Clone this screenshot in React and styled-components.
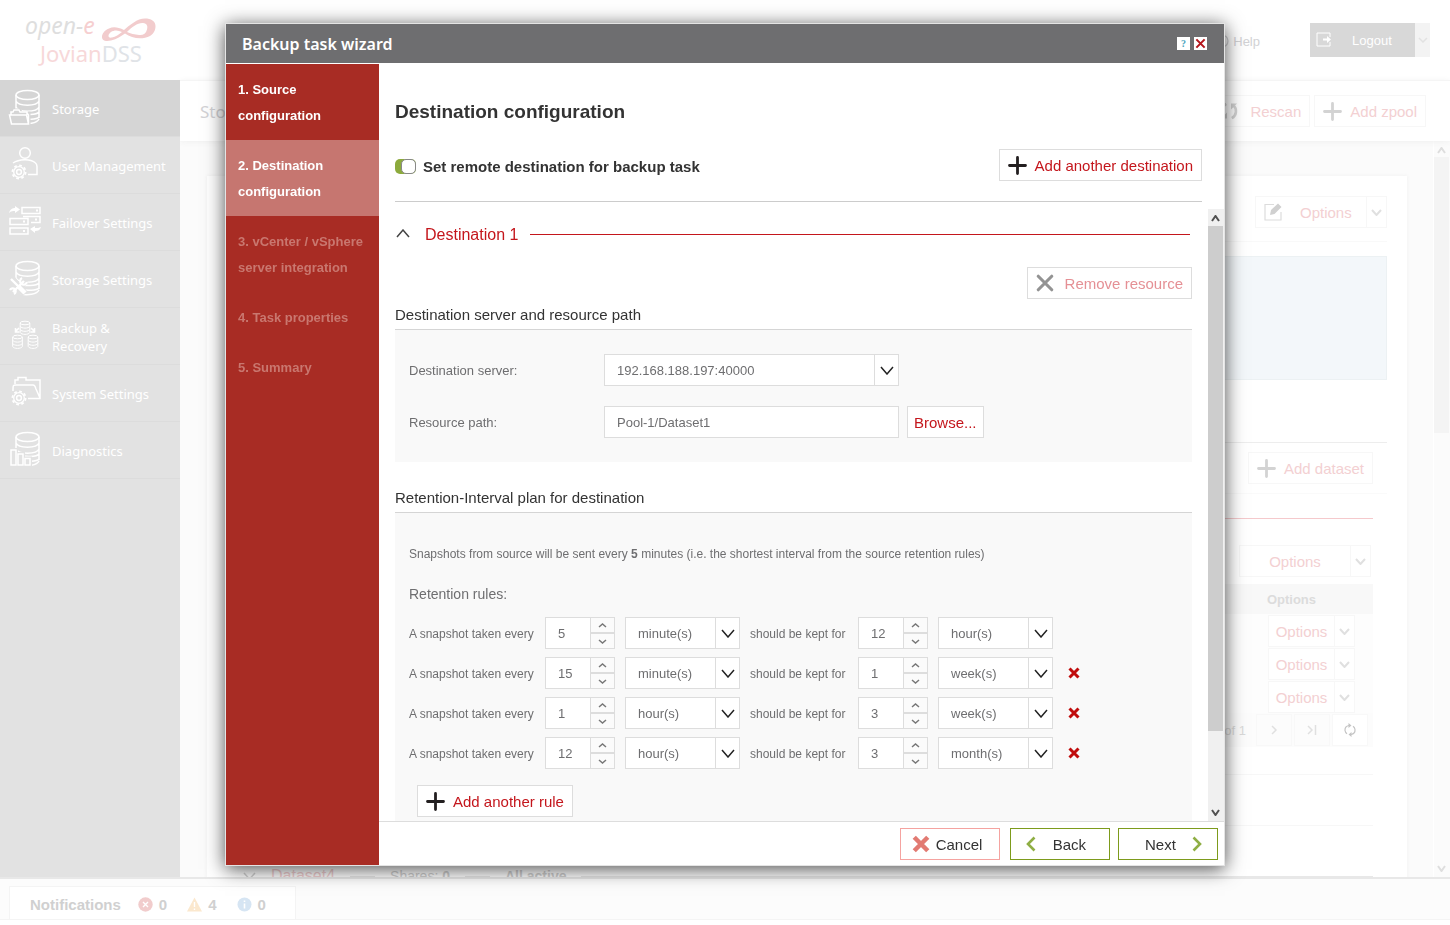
import React from "react";
import styled, { createGlobalStyle } from "styled-components";

const Global = createGlobalStyle`
  *, *::before { box-sizing: border-box; }
  body { margin: 0; background: #fff; font-family: "Liberation Sans", Arial, sans-serif; color: #333; }
  button, input, select { font-family: inherit; margin: 0; }
  a { text-decoration: none; }
`;

/* ---------- faded application behind the wizard ---------- */

const Page = styled.div`
  display: flex;
  flex-direction: column;
  height: 100vh;
  min-height: 640px;
  overflow: hidden;
`;

const Header = styled.header`
  flex: none;
  display: flex;
  justify-content: space-between;
  align-items: center;
  height: 80px;
  padding: 0 20px 0 24px;
`;

const HeaderActions = styled.div`
  display: flex;
  align-items: center;
  gap: 50px;
`;

const HelpLink = styled.a`
  display: flex;
  align-items: center;
  gap: 4px;
  padding-top: 2px;
  font-size: 13px;
  color: #d2d2d5;
`;

const Logout = styled.div`
  display: flex;
  height: 34px;
`;

const LogoutButton = styled.button`
  display: flex;
  align-items: center;
  gap: 20px;
  width: 105px;
  padding: 0 6px;
  border: 0;
  background: #d8d8d8;
  color: #fff;
  font-size: 13px;
`;

const LogoutMore = styled.button`
  display: grid;
  place-items: center;
  width: 15px;
  padding: 0;
  border: 0;
  background: #f3f3f3;
`;

const Middle = styled.div`
  flex: 1;
  min-height: 0;
  display: flex;
`;

const Sidebar = styled.nav`
  flex: none;
  z-index: 2;
  width: 180px;
  background: #e2e2e2;
`;

const SideLink = styled.a`
  display: flex;
  align-items: center;
  gap: 9px;
  height: 57px;
  padding: 0 12px 0 7px;
  border-bottom: 1px solid #dcdcdc;
  background: ${(p) => (p.$active ? "#d5d5d5" : "transparent")};
  color: #fff;
  font: 13px/18px "Noto Sans", sans-serif;
`;

const SideText = styled.span`
  padding-top: 2px;
`;

const SideIcon = styled.svg`
  flex: none;
  fill: none;
  stroke: #fff;
  stroke-width: 1.5;
`;

const Workspace = styled.div`
  flex: 1;
  min-width: 0;
  display: flex;
  flex-direction: column;
`;

const TitleBar = styled.div`
  flex: none;
  z-index: 1;
  display: flex;
  justify-content: space-between;
  align-items: center;
  height: 61px;
  padding: 0 24px 0 20px;
  border-top: 1px solid #f5f5f5;
  box-shadow: 0 1px 6px #f0f0f0;
  background: #fff;
`;

const PageTitle = styled.h1`
  margin: 0;
  font: 17px "Noto Sans", sans-serif;
  color: #d2d2d5;
`;

const Group = styled.div`
  display: flex;
  gap: 4px;
`;

const FadedButton = styled.button`
  display: flex;
  align-items: center;
  justify-content: ${(p) => (p.$center ? "center" : "flex-start")};
  gap: ${(p) => p.$gap || 8}px;
  width: ${(p) => (p.$width ? p.$width + "px" : "auto")};
  height: 32px;
  padding: 0 8px;
  border: 1px solid #f7f7f7;
  background: #fff;
  color: #f3d0d2;
  font-size: 15px;
  white-space: nowrap;
`;

const FadedMore = styled.button`
  display: grid;
  place-items: center;
  width: 21px;
  height: 32px;
  margin-left: -1px;
  padding: 0;
  border: 1px solid #f7f7f7;
  background: #fff;
`;

const Split = styled.div`
  display: flex;
`;

const Desk = styled.div`
  flex: 1;
  min-height: 0;
  display: flex;
  background: #fbfbfb;
`;

const DeskScroll = styled.div`
  flex: 1;
  min-width: 0;
  overflow: hidden;
  padding: 35px 26px 0 27px;
`;

const Card = styled.section`
  height: 900px;
  padding: 20px 20px 0 36px;
  background: #fff;
  box-shadow: 0 0 4px #efefef;
`;

const CardTop = styled.div`
  display: flex;
  justify-content: flex-end;
  height: 46px;
  border-bottom: 1px solid #f9f9f9;
`;

const InfoBox = styled.div`
  height: 124px;
  margin-top: 14px;
  border: 1px solid #ecf1f3;
  background: #f3f7fa;
`;

const Tools = styled.div`
  display: flex;
  justify-content: flex-end;
  height: 51px;
  margin-top: 62px;
  padding: 9px 14px 0 0;
  border-top: 1px solid #ededed;
`;

const Inset = styled.div`
  padding-right: 14px;
  border-top: 1px solid #fafafa;
`;

const DatasetBar = styled.div`
  display: flex;
  justify-content: flex-end;
  height: 66px;
  margin-top: 24px;
  padding: 26px 2px 0 0;
  border-top: 1px solid #f5c9cc;
`;

const FadedTable = styled.table`
  width: 100%;
  border-collapse: collapse;
  background: #fdfdfd;
  font-size: 15px;

  th {
    height: 30px;
    padding: 0 57px 0 0;
    background: #f8f8f8;
    color: #dcdcdc;
    font-size: 13px;
    text-align: right;
  }
  td {
    height: 33px;
    padding: 1px 18px 0 0;
  }
  td > div { justify-content: flex-end; }
`;

const Pager = styled.div`
  display: flex;
  justify-content: flex-end;
  align-items: center;
  gap: 2px;
  height: 34px;
  padding-right: 5px;
  background: #fcfcfc;
  color: #dadada;
  font-size: 13px;
`;

const PagerButton = styled.button`
  display: grid;
  place-items: center;
  width: 36px;
  height: 32px;
  padding: 0;
  border: 1px solid #f8f8f8;
  background: ${(p) => (p.$live ? "#fff" : "#fcfcfc")};
`;

const PagerText = styled.span`
  margin-right: 8px;
`;

const Divider = styled.div`
  height: ${(p) => p.$height}px;
  border-bottom: 1px solid #f7f7f7;
`;

const NextDataset = styled.div`
  display: flex;
  align-items: center;
  gap: 15px;
  height: 100px;
  color: #d2d2d2;
  font-size: 14px;
`;

const NextName = styled.span`
  color: #f3d0d2;
  font-size: 16px;
`;

const Hair = styled.span`
  flex: ${(p) => (p.$grow ? "1" : "none")};
  width: 25px;
  height: 1px;
  background: #e8e8e8;
`;

const PageRail = styled.div`
  flex: none;
  display: flex;
  flex-direction: column;
  align-items: center;
  width: 17px;
  padding: 6px 1px 5px 0;
  border-left: 1px solid #fff;
`;

const PageThumb = styled.div`
  width: 15px;
  height: 38%;
  margin-top: 3px;
  margin-bottom: auto;
  background: #f4f4f4;
`;

const Bottom = styled.footer`
  flex: none;
  display: flex;
  height: 48px;
  padding-bottom: 5px;
  border-top: 2px solid #e8e8e8;
`;

const BottomBand = styled.div`
  flex: 1;
  display: flex;
  align-items: flex-end;
  padding-left: 9px;
  border-bottom: 1px solid #f4f4f4;
  background: #fcfcfc;
`;

const NoticeTab = styled.div`
  display: flex;
  align-items: center;
  gap: 17px;
  width: 287px;
  height: 33px;
  padding: 2px 0 0 20px;
  border: 1px solid #f4f4f4;
  border-bottom: 0;
  background: #fff;
  color: #d0d0d0;
  font-size: 15px;
  font-weight: bold;
`;

const Count = styled.span`
  display: flex;
  align-items: center;
  gap: 6px;
  margin-right: 3px;
`;

/* ---------- wizard ---------- */

const Backdrop = styled.div`
  position: fixed;
  inset: 0;
  z-index: 5;
  display: flex;
  justify-content: center;
  align-items: flex-start;
  padding: 23px 16px 59px;
`;

const Dialog = styled.section`
  display: flex;
  flex-direction: column;
  width: 1000px;
  max-width: 100%;
  height: 100%;
  border: 1px solid #e4e4e4;
  background: #fff;
  box-shadow: 0 3px 18px rgba(0, 0, 0, 0.7);
`;

const DialogBar = styled.header`
  flex: none;
  display: flex;
  align-items: center;
  gap: 4px;
  height: 39px;
  margin-bottom: 1px;
  padding: 0 17px 0 16px;
  background: #6e6e70;
`;

const DialogTitle = styled.h2`
  flex: 1;
  margin: 0;
  color: #fff;
  font: 600 16px "Noto Sans", sans-serif;
`;

const BarButton = styled.button`
  display: grid;
  place-items: center;
  width: 13px;
  height: 13px;
  padding: 0;
  border: 0;
  background: #fff;
  color: #4ba3bd;
  font: bold 10px/13px "Liberation Serif", serif;
`;

const DialogBody = styled.div`
  flex: 1;
  min-height: 0;
  display: flex;
`;

const Steps = styled.ol`
  flex: none;
  width: 153px;
  margin: 0;
  padding: 0;
  list-style: none;
  background: #a82c24;
`;

const Step = styled.li`
  padding: 13px 8px 11px 12px;
  background: ${(p) => (p.$state === "current" ? "#c67670" : "transparent")};
  color: ${(p) => (p.$state === "later" ? "#c9776f" : "#fff")};
  font-size: 13px;
  font-weight: bold;
  line-height: 26px;
`;

const Content = styled.div`
  flex: 1;
  min-width: 0;
  display: flex;
  flex-direction: column;
`;

const Intro = styled.div`
  flex: none;
  margin: 0 22px 7px 16px;
  padding: 34px 0 20px;
  border-bottom: 1px solid #ccc;
`;

const Heading = styled.h3`
  margin: 0 0 24px;
  font-size: 19px;
  line-height: 27px;
  color: #333;
`;

const IntroRow = styled.div`
  display: flex;
  justify-content: space-between;
  align-items: center;
`;

const SwitchLabel = styled.label`
  display: flex;
  align-items: center;
  gap: 7px;
  padding-top: 2px;
  color: #333;
  font-size: 15px;
  font-weight: bold;
`;

const Switch = styled.input`
  appearance: none;
  width: 21px;
  height: 15px;
  margin: 0;
  border-radius: 5px;
  background: #8caa3c;

  &::before {
    content: "";
    display: block;
    width: 15px;
    height: 15px;
    margin-left: 6px;
    border: 1px solid #888;
    border-radius: 5px;
    background: #fff;
  }
`;

const Button = styled.button`
  display: flex;
  align-items: center;
  gap: ${(p) => p.$gap || 8}px;
  height: 32px;
  padding: ${(p) => (p.$plain ? "0 6px" : "0 8px")};
  border: 1px solid #ddd;
  background: #fff;
  color: ${(p) => (p.disabled ? "#e59095" : "#c4161c")};
  font-size: 15px;
  white-space: nowrap;
`;

const ScrollRow = styled.div`
  flex: 1;
  min-height: 0;
  display: flex;
`;

const ScrollArea = styled.div`
  flex: 1;
  min-width: 0;
  overflow: hidden;
  padding: 12px 16px 0;
`;

const Rail = styled.div`
  flex: none;
  display: flex;
  flex-direction: column;
  align-items: center;
  justify-content: space-between;
  width: 16px;
  padding: 6px 1px 5px 0;
  background: #f0f0f0;
`;

const RailThumb = styled.div`
  width: 15px;
  height: 84%;
  margin: 4px 0 auto;
  background: #cdcdcd;
`;

const DestinationHead = styled.div`
  display: flex;
  align-items: center;
  gap: 12px;
  height: 27px;
  padding-right: 2px;
  color: #c4161c;
  font-size: 16px;
`;

const Toggle = styled.button`
  display: grid;
  place-items: center;
  width: 18px;
  height: 18px;
  padding: 0 3px 3px 0;
  border: 0;
  background: none;
`;

const RedLine = styled.span`
  flex: 1;
  height: 1px;
  background: #c4161c;
`;

const RemoveRow = styled.div`
  display: flex;
  justify-content: flex-end;
  margin-top: 19px;
`;

const SectionTitle = styled.h4`
  height: 31px;
  margin: ${(p) => p.$top || 0}px 0 0;
  padding-top: 6px;
  border-bottom: 1px solid #d5d5d5;
  color: #333;
  font-size: 15px;
  font-weight: normal;
  line-height: 20px;
`;

const Panel = styled.div`
  padding: ${(p) => p.$top || 24}px 14px 24px;
  background: #f9f9f9;
  color: #6e6e70;
  font-size: 12px;
`;

const Field = styled.div`
  display: grid;
  grid-template-columns: 195px 295px auto;
  align-items: center;
  justify-content: start;
  & + & { margin-top: 20px; }
`;

const BrowseCell = styled.div`
  padding-left: 8px;
`;

const FieldLabel = styled.label`
  font-size: 13px;
`;

const TextInput = styled.input`
  width: 100%;
  height: 32px;
  padding: 0 12px;
  border: 1px solid #ddd;
  background: #fff;
  color: #6e6e70;
  font-size: 13px;
`;

const SelectBox = styled.div`
  display: grid;
  grid-template-columns: 1fr 25px;
`;

const NativeSelect = styled.select`
  grid-area: 1 / 1 / 2 / 3;
  appearance: none;
  height: 32px;
  padding: 0 32px 0 12px;
  border: 1px solid #ddd;
  border-radius: 0;
  background: #fff;
  color: #6e6e70;
  font-size: 13px;
`;

const SelectArrow = styled.span`
  grid-area: 1 / 2;
  display: grid;
  place-items: center;
  margin: 1px 1px 1px 0;
  border-left: 1px solid #ddd;
  pointer-events: none;
`;

const Note = styled.p`
  margin: 0;
  line-height: 18px;
`;

const RulesTitle = styled.p`
  margin: 21px 0 13px;
  font-size: 14px;
  line-height: 20px;
`;

const Rule = styled.div`
  display: grid;
  grid-template-columns: 126px 70px 115px 98px 70px 115px 22px;
  column-gap: 10px;
  align-items: center;
  height: 32px;
  margin-bottom: 8px;
`;

const RuleText = styled.span`
  padding-top: 2px;
  line-height: 18px;
  white-space: nowrap;
`;

const Stepper = styled.div`
  display: grid;
  grid-template-columns: 1fr 24px;
  grid-template-rows: 1fr 1fr;
  height: 32px;
  border: 1px solid #ddd;
  background: #fff;
`;

const StepperInput = styled.input`
  grid-row: 1 / 3;
  min-width: 0;
  padding: 0 12px;
  border: 0;
  background: none;
  color: #6e6e70;
  font-size: 13px;
`;

const StepperButton = styled.button`
  display: grid;
  place-items: center;
  padding: 0;
  border: 0;
  border-left: 1px solid #ddd;
  border-${(p) => (p.$up ? "bottom" : "top")}: 1px solid #ddd;
  background: #fbfbfb;
`;

const DeleteButton = styled.button`
  display: grid;
  place-items: center;
  width: 22px;
  height: 22px;
  padding: 0;
  border: 0;
  background: none;
`;

const AddRule = styled.div`
  display: flex;
  margin: 16px 8px 0;
`;

const DialogFooter = styled.footer`
  flex: none;
  display: flex;
  justify-content: flex-end;
  gap: 8px;
  height: 44px;
  padding: 6px 6px 5px;
  border-top: 1px solid #ddd;
`;

const FooterButton = styled.button`
  display: flex;
  align-items: center;
  justify-content: ${(p) => (p.$spread ? "space-between" : "center")};
  gap: 6px;
  width: 100px;
  height: 32px;
  margin-right: ${(p) => (p.$tone === "danger" ? 2 : 0)}px;
  padding: ${(p) => p.$pad};
  border: 1px solid ${(p) => (p.$tone === "danger" ? "#f5a3a0" : "#7d9b1c")};
  background: #fff;
  color: #333;
  font-size: 15px;
`;

/* ---------- drawings ---------- */

const Chevron = ({ w = 13, h = 7, color = "#222", width = 1.5, up, cap }) => (
  <svg width={w} height={h} viewBox={`0 0 ${w} ${h}`} fill="none" aria-hidden="true">
    <path
      d={up ? `M1 ${h - 1}L${w / 2} 1L${w - 1} ${h - 1}` : `M1 1L${w / 2} ${h - 1}L${w - 1} 1`}
      stroke={color}
      strokeWidth={width}
      strokeLinecap={cap}
    />
  </svg>
);

const Plus = ({ color = "#231f20" }) => (
  <svg width="19" height="19" viewBox="0 0 19 19" aria-hidden="true">
    <path d="M9.500 1.500v16M1.500 9.500h16" stroke={color} strokeWidth="2.800" strokeLinecap="round" />
  </svg>
);

const Cross = ({ size, color, width, cap }) => (
  <svg width={size} height={size} viewBox="0 0 16 16" aria-hidden="true">
    <path d="M2 2L14 14M14 2L2 14" stroke={color} strokeWidth={width} strokeLinecap={cap} />
  </svg>
);

const Recycle = ({ size = 18, color = "#d3d3d3", width = 2.6 }) => (
  <svg width={size} height={size} viewBox="0 0 18 18" fill="none" stroke={color} strokeWidth={width} aria-hidden="true">
    <path d="M6.200 1.800A8 8 0 0 0 4.500 14.600M11.800 16.200A8 8 0 0 0 13.500 3.400" />
    <path d="M1 16.500h6v-6zM17 1.500h-6v6z" fill={color} stroke="none" />
  </svg>
);

/* two thin arcs with small arrow heads at the top and the bottom */
const Refresh = () => (
  <svg width="12" height="14" viewBox="0 0 12 14" fill="none" stroke="#c4c4c4" strokeWidth="1.200" aria-hidden="true">
    <path d="M5 2.500C2 3 .8 5 1 7.500c.2 1.500 1 2.500 2 3.200M7 11.500c3-.5 4.200-2.500 4-5-.2-1.500-1-2.500-2-3.200" />
    <path d="M4.500 0l3 2.500-3 2.500zM7.500 9l-3 2.500 3 2.500z" fill="#c4c4c4" stroke="none" />
  </svg>
);

const Edit = () => (
  <svg width="18" height="18" viewBox="0 0 18 18" aria-hidden="true">
    <path d="M10 1.500H1v15.500h16V9" fill="none" stroke="#dcdcdc" strokeWidth="1.200" />
    <path d="M6 12l1-5 7-6.500 3.500 3.500-7 7z" fill="#d0d0d0" />
  </svg>
);

const Disks = () => (
  <g>
    <ellipse cx="20.500" cy="6" rx="11.500" ry="4.500" />
    <path d="M9 6v23M32 6v23M9 12c2 5.500 21 5.500 23 0M9 18c2 5.500 21 5.500 23 0M12 23.500c5 3 18 2.500 20-.5M14 29c5 2 16 1.500 18-1M14 34c6 1.500 16 .5 18-4" />
  </g>
);

const Gear = ({ x, y }) => (
  <g transform={`translate(${x} ${y})`}>
    <circle r="5.300" strokeWidth="1.300" />
    <circle r="6.600" strokeWidth="1.800" strokeDasharray="2.700 2.480" />
    <circle r="2.400" />
  </g>
);

const icons = {
  storage: (
    <>
      <Disks />
      <path d="M3 35V24h3l1-3h6l1 3h8v11z" fill="#d5d5d5" stroke="#d5d5d5" strokeWidth="3" />
      <path d="M4 26v-3h2l1-2h5l1 2h7v3M2.500 26h17l2 9H4.500zM20 24l1.500 2v9" />
    </>
  ),
  user: (
    <>
      <circle cx="18" cy="7" r="5.300" />
      <path d="M6 17c6-4 17-4.500 22-.5 1.500 1 2 2 2 4V28.500H21" />
      <Gear x={12} y={26} />
    </>
  ),
  failover: (
    <>
      <path d="M15 4.500h18v6H15zM16 13.500h17v6H24M3 15.500h18v6H3zM3 25h18v6H3z" />
      <path d="M29 7.500h2M28 16.500h2M16 18.500h2M16 28h2" strokeWidth="1.800" />
      <path d="M2 10c1-4 4-5 6-5V3l5 3.500L8 10V8c-2 0-4 0-6 2zM34 24c-1 3-3 4-6 4v2l-5-4 5-3v2c2 0 4 0 6-1z" fill="#fff" stroke="none" />
    </>
  ),
  settings: (
    <>
      <Disks />
      <path d="M5 19L18 34M19 20L5 34" stroke="#e2e2e2" strokeWidth="7" />
      <path d="M4 19L11 26M17 21L6 32" strokeWidth="2.400" />
      <path d="M11 26l7 7" strokeWidth="4.500" />
      <path d="M15 18a3.500 3.500 0 1 0 5 4M3 30a3 3 0 1 1 4 4" strokeWidth="2.200" />
    </>
  ),
  backup: (
    <g strokeWidth="1">
      {[[18, 6], [10.5, 20], [26, 20]].map(([x, y]) => (
        <g key={x} transform={`translate(${x} ${y})`}>
          <ellipse rx="4.800" ry="1.800" />
          <path d="M-4.800 0v9.500c1 2.500 8.600 2.500 9.600 0V0M-4.800 3.300c1 2.400 8.600 2.400 9.600 0M-4.800 6.500c1 2.400 8.600 2.400 9.600 0" />
        </g>
      ))}
      <path d="M12 11l-3 3M24 11l3 3M8.500 11v4h4M27.500 11v4h-4" strokeWidth="1.600" />
    </g>
  ),
  system: (
    <>
      <path d="M8 10V6h3V3.500h8V6h14v18.500H21M6 17c0-6 0-6 3-6h17c2 0 2 1 3 4l4 9" />
      <Gear x={12} y={24} />
    </>
  ),
  diagnostics: (
    <>
      <Disks />
      <path d="M4 19h5v15H4zM11 23h5v11h-5zM18 27.500h5V34h-5z" fill="#e2e2e2" stroke="#e2e2e2" strokeWidth="4" />
      <path d="M4 19h5v15H4zM11 23h5v11h-5zM18 27.500h5V34h-5z" />
    </>
  ),
};

const LogoSvg = styled.svg`
  overflow: visible;
`;

const Logo = () => (
  <LogoSvg width="134" height="54" viewBox="0 0 134 54" role="img" aria-label="open-e JovianDSS">
    <g fontFamily="Noto Sans, sans-serif">
      <text x="1" y="21" fontSize="23" fontStyle="italic" fill="#dedede">
        open-<tspan fill="#f6cfd0">e</tspan>
      </text>
      <text x="16" y="49" fontSize="22" fill="#f7d8d9">
        Jovian<tspan fill="#e0e3e7">DSS</tspan>
      </text>
    </g>
    <path
      fillRule="evenodd"
      fill="#f2cccd"
      d="M100 17C94 14 89 13.500 85 15.500C80 17.500 78 21 78 24C78 28 82 28.500 87 27.500C93 26 97 23 101 20.500C108 25.500 118 27 126 23C130 20.500 131.500 17 131.500 13C131.500 8 127 5.500 121 5.500C113 5.500 106 12 100 17ZM98 19C94 17 90 17 87 19C84 21 83 25.500 88 24.500C91.500 23.800 95 21.500 98 19ZM103 19C108 14 114 9.500 119 10C123 10.500 124 13 123 16.500C122 20.500 119 22.500 115 22C111 21.500 106 20.500 103 19Z"
    />
  </LogoSvg>
);

/* ---------- data ---------- */

const sideItems = [
  ["storage", "Storage"],
  ["user", "User Management"],
  ["failover", "Failover Settings"],
  ["settings", "Storage Settings"],
  ["backup", "Backup & Recovery"],
  ["system", "System Settings"],
  ["diagnostics", "Diagnostics"],
];

const steps = [
  ["1. Source configuration", "done"],
  ["2. Destination configuration", "current"],
  ["3. vCenter / vSphere server integration", "later"],
  ["4. Task properties", "later"],
  ["5. Summary", "later"],
];

const rules = [
  { every: 5, unit: "minute(s)", keep: 12, keepUnit: "hour(s)" },
  { every: 15, unit: "minute(s)", keep: 1, keepUnit: "week(s)" },
  { every: 1, unit: "hour(s)", keep: 3, keepUnit: "week(s)" },
  { every: 12, unit: "hour(s)", keep: 3, keepUnit: "month(s)" },
];

const units = ["minute(s)", "hour(s)", "day(s)", "week(s)", "month(s)"];

function Select({ options, value, ...rest }) {
  return (
    <SelectBox>
      <NativeSelect defaultValue={value} {...rest}>
        {options.map((o) => (
          <option key={o}>{o}</option>
        ))}
      </NativeSelect>
      <SelectArrow>
        <Chevron w={14} h={9} />
      </SelectArrow>
    </SelectBox>
  );
}

function NumberStepper({ value, label }) {
  return (
    <Stepper>
      <StepperInput type="text" inputMode="numeric" defaultValue={value} aria-label={label} />
      <StepperButton $up aria-label="Increase">
        <Chevron w={9} h={5} up color="#777" />
      </StepperButton>
      <StepperButton aria-label="Decrease">
        <Chevron w={9} h={5} color="#777" />
      </StepperButton>
    </Stepper>
  );
}

function FadedOptions({ width, icon, gap, center }) {
  return (
    <Split>
      <FadedButton $width={width} $gap={gap} $center={center}>
        {icon}
        Options
      </FadedButton>
      <FadedMore aria-label="More options">
        <Chevron w={11} h={7} color="#e0e0e0" width={2} />
      </FadedMore>
    </Split>
  );
}

function Background() {
  return (
    <Page>
      <Header>
        <Logo />
        <HeaderActions>
          <HelpLink href="#help">
            <svg width="14" height="14" viewBox="0 0 14 14" aria-hidden="true">
              <circle cx="7" cy="7" r="6" fill="none" stroke="#d2d2d5" strokeWidth="1.200" />
            </svg>
            Help
          </HelpLink>
          <Logout>
            <LogoutButton>
              <svg width="16" height="16" viewBox="0 0 16 16" aria-hidden="true">
                <path d="M14 5V1H1v13h13v-4" fill="none" stroke="#fff" />
                <path d="M7 6.500h4V4l4 3.500-4 3.500V8.500H7z" fill="#fff" />
              </svg>
              Logout
            </LogoutButton>
            <LogoutMore aria-label="Session menu">
              <Chevron w={10} h={6} color="#e2e2e2" />
            </LogoutMore>
          </Logout>
        </HeaderActions>
      </Header>
      <Middle>
        <Sidebar>
          {sideItems.map(([id, label], i) => (
            <SideLink key={id} href={`#${id}`} $active={i === 0}>
              <SideIcon width="36" height="38" viewBox="0 0 36 38" aria-hidden="true">
                {icons[id]}
              </SideIcon>
              <SideText>{label}</SideText>
            </SideLink>
          ))}
        </Sidebar>
        <Workspace>
          <TitleBar>
            <PageTitle>Storage</PageTitle>
            <Group>
              <FadedButton $gap={12}>
                <Recycle />
                Rescan
              </FadedButton>
              <FadedButton>
                <Plus color="#d3d3d3" />
                Add zpool
              </FadedButton>
            </Group>
          </TitleBar>
          <Desk>
            <DeskScroll>
              <Card>
                <CardTop>
                  <FadedOptions width={112} icon={<Edit />} gap={18} />
                </CardTop>
                <InfoBox />
                <Tools>
                  <FadedButton>
                    <Plus color="#d3d3d3" />
                    Add dataset
                  </FadedButton>
                </Tools>
                <Inset>
                  <DatasetBar>
                    <FadedOptions width={112} center />
                  </DatasetBar>
                  <FadedTable>
                    <thead>
                      <tr>
                        <th>Options</th>
                      </tr>
                    </thead>
                    <tbody>
                      {[1, 2, 3].map((n) => (
                        <tr key={n}>
                          <td>
                            <FadedOptions width={67} center />
                          </td>
                        </tr>
                      ))}
                    </tbody>
                  </FadedTable>
                  <Pager>
                    <PagerText>of 1</PagerText>
                    <PagerButton aria-label="Next page">
                      <svg width="8" height="10" viewBox="0 0 8 10">
                        <path d="M2 1l4 4-4 4" fill="none" stroke="#e0e0e0" strokeWidth="1.500" />
                      </svg>
                    </PagerButton>
                    <PagerButton aria-label="Last page">
                      <svg width="10" height="10" viewBox="0 0 10 10">
                        <path d="M1 1l4 4-4 4M8.500 0v10" fill="none" stroke="#e0e0e0" strokeWidth="1.500" />
                      </svg>
                    </PagerButton>
                    <PagerButton $live aria-label="Refresh">
                      <Refresh />
                    </PagerButton>
                  </Pager>
                  <Divider $height={28} />
                  <Divider $height={51} />
                  <NextDataset>
                    <Chevron w={13} h={8} color="#d2d2d2" />
                    <NextName>Dataset4</NextName>
                    <Hair />
                    <span>
                      Shares: <b>0</b>
                    </span>
                    <Hair />
                    <b>All active</b>
                    <Hair $grow />
                  </NextDataset>
                </Inset>
              </Card>
            </DeskScroll>
            <PageRail>
              <Chevron w={9} h={7} up color="#dedede" width={2} />
              <PageThumb />
              <Chevron w={9} h={7} color="#dedede" width={2} />
            </PageRail>
          </Desk>
        </Workspace>
      </Middle>
      <Bottom>
        <BottomBand>
          <NoticeTab>
            <span>Notifications</span>
            <Count>
              <svg width="15" height="15" viewBox="0 0 15 15" aria-hidden="true">
                <circle cx="7.500" cy="7.500" r="7.200" fill="#f1cccc" />
                <path d="M5 5l5 5M10 5l-5 5" stroke="#fff" strokeWidth="1.400" />
              </svg>
              0
            </Count>
            <Count>
              <svg width="15" height="15" viewBox="0 0 15 15" aria-hidden="true">
                <path d="M7.500 0.500L15 14.500H0z" fill="#fbe8ce" />
                <path d="M7.500 5v5M7.500 11.500v1.500" stroke="#fff" strokeWidth="1.400" />
              </svg>
              4
            </Count>
            <Count>
              <svg width="15" height="15" viewBox="0 0 15 15" aria-hidden="true">
                <circle cx="7.500" cy="7.500" r="7" fill="#d6e5f3" />
                <path d="M7.500 3.500v1.500M7.500 6.500v5" stroke="#fff" strokeWidth="1.600" />
              </svg>
              0
            </Count>
          </NoticeTab>
        </BottomBand>
      </Bottom>
    </Page>
  );
}

function Wizard() {
  return (
    <Backdrop>
      <Dialog role="dialog" aria-labelledby="wizard-title">
        <DialogBar>
          <DialogTitle id="wizard-title">Backup task wizard</DialogTitle>
          <BarButton aria-label="Help">?</BarButton>
          <BarButton aria-label="Close">
            <Cross size={11} color="#b5161c" width={3} />
          </BarButton>
        </DialogBar>
        <DialogBody>
          <Steps>
            {steps.map(([label, state]) => (
              <Step key={label} $state={state}>
                {label}
              </Step>
            ))}
          </Steps>
          <Content>
            <Intro>
              <Heading>Destination configuration</Heading>
              <IntroRow>
                <SwitchLabel>
                  <Switch type="checkbox" role="switch" defaultChecked />
                  Set remote destination for backup task
                </SwitchLabel>
                <Button>
                  <Plus />
                  Add another destination
                </Button>
              </IntroRow>
            </Intro>
            <ScrollRow>
              <ScrollArea>
                <DestinationHead>
                  <Toggle aria-label="Collapse">
                    <Chevron w={14} h={9} up color="#444" />
                  </Toggle>
                  <span>Destination 1</span>
                  <RedLine />
                </DestinationHead>
                <RemoveRow>
                  <Button disabled $gap={11}>
                    <Cross size={18} color="#939393" width={2.8} cap="round" />
                    Remove resource
                  </Button>
                </RemoveRow>
                <SectionTitle>Destination server and resource path</SectionTitle>
                <Panel>
                  <Field>
                    <FieldLabel htmlFor="server">Destination server:</FieldLabel>
                    <Select id="server" options={["192.168.188.197:40000"]} value="192.168.188.197:40000" />
                  </Field>
                  <Field>
                    <FieldLabel htmlFor="path">Resource path:</FieldLabel>
                    <TextInput id="path" defaultValue="Pool-1/Dataset1" />
                    <BrowseCell>
                      <Button $plain>Browse...</Button>
                    </BrowseCell>
                  </Field>
                </Panel>
                <SectionTitle $top={20}>Retention-Interval plan for destination</SectionTitle>
                <Panel $top={32}>
                  <Note>
                    Snapshots from source will be sent every <b>5</b> minutes (i.e. the shortest interval from the source
                    retention rules)
                  </Note>
                  <RulesTitle>Retention rules:</RulesTitle>
                  {rules.map((r, i) => (
                    <Rule key={i}>
                      <RuleText>A snapshot taken every</RuleText>
                      <NumberStepper value={r.every} label="Interval" />
                      <Select options={units} value={r.unit} aria-label="Interval unit" />
                      <RuleText>should be kept for</RuleText>
                      <NumberStepper value={r.keep} label="Retention" />
                      <Select options={units} value={r.keepUnit} aria-label="Retention unit" />
                      {i > 0 && (
                        <DeleteButton aria-label="Delete rule">
                          <Cross size={12} color="#c00d0d" width={4} />
                        </DeleteButton>
                      )}
                    </Rule>
                  ))}
                  <AddRule>
                    <Button>
                      <Plus />
                      Add another rule
                    </Button>
                  </AddRule>
                </Panel>
              </ScrollArea>
              <Rail>
                <Chevron w={9} h={7} up color="#505050" width={2} />
                <RailThumb />
                <Chevron w={9} h={7} color="#505050" width={2} />
              </Rail>
            </ScrollRow>
            <DialogFooter>
              <FooterButton $tone="danger" $pad="0 6px 0 0">
                <Cross size={18} color="#e27a72" width={4} />
                Cancel
              </FooterButton>
              <FooterButton $spread $pad="0 23px 0 15px">
                <svg width="10" height="16" viewBox="0 0 10 16" aria-hidden="true">
                  <path d="M8.500 1.500L2 8l6.500 6.500" fill="none" stroke="#8fae44" strokeWidth="2.600" />
                </svg>
                Back
              </FooterButton>
              <FooterButton $spread $pad="0 15px 0 26px">
                Next
                <svg width="10" height="16" viewBox="0 0 10 16" aria-hidden="true">
                  <path d="M1.500 1.500L8 8l-6.500 6.500" fill="none" stroke="#8fae44" strokeWidth="2.600" />
                </svg>
              </FooterButton>
            </DialogFooter>
          </Content>
        </DialogBody>
      </Dialog>
    </Backdrop>
  );
}

export default function App() {
  return (
    <>
      <Global />
      <Background />
      <Wizard />
    </>
  );
}
